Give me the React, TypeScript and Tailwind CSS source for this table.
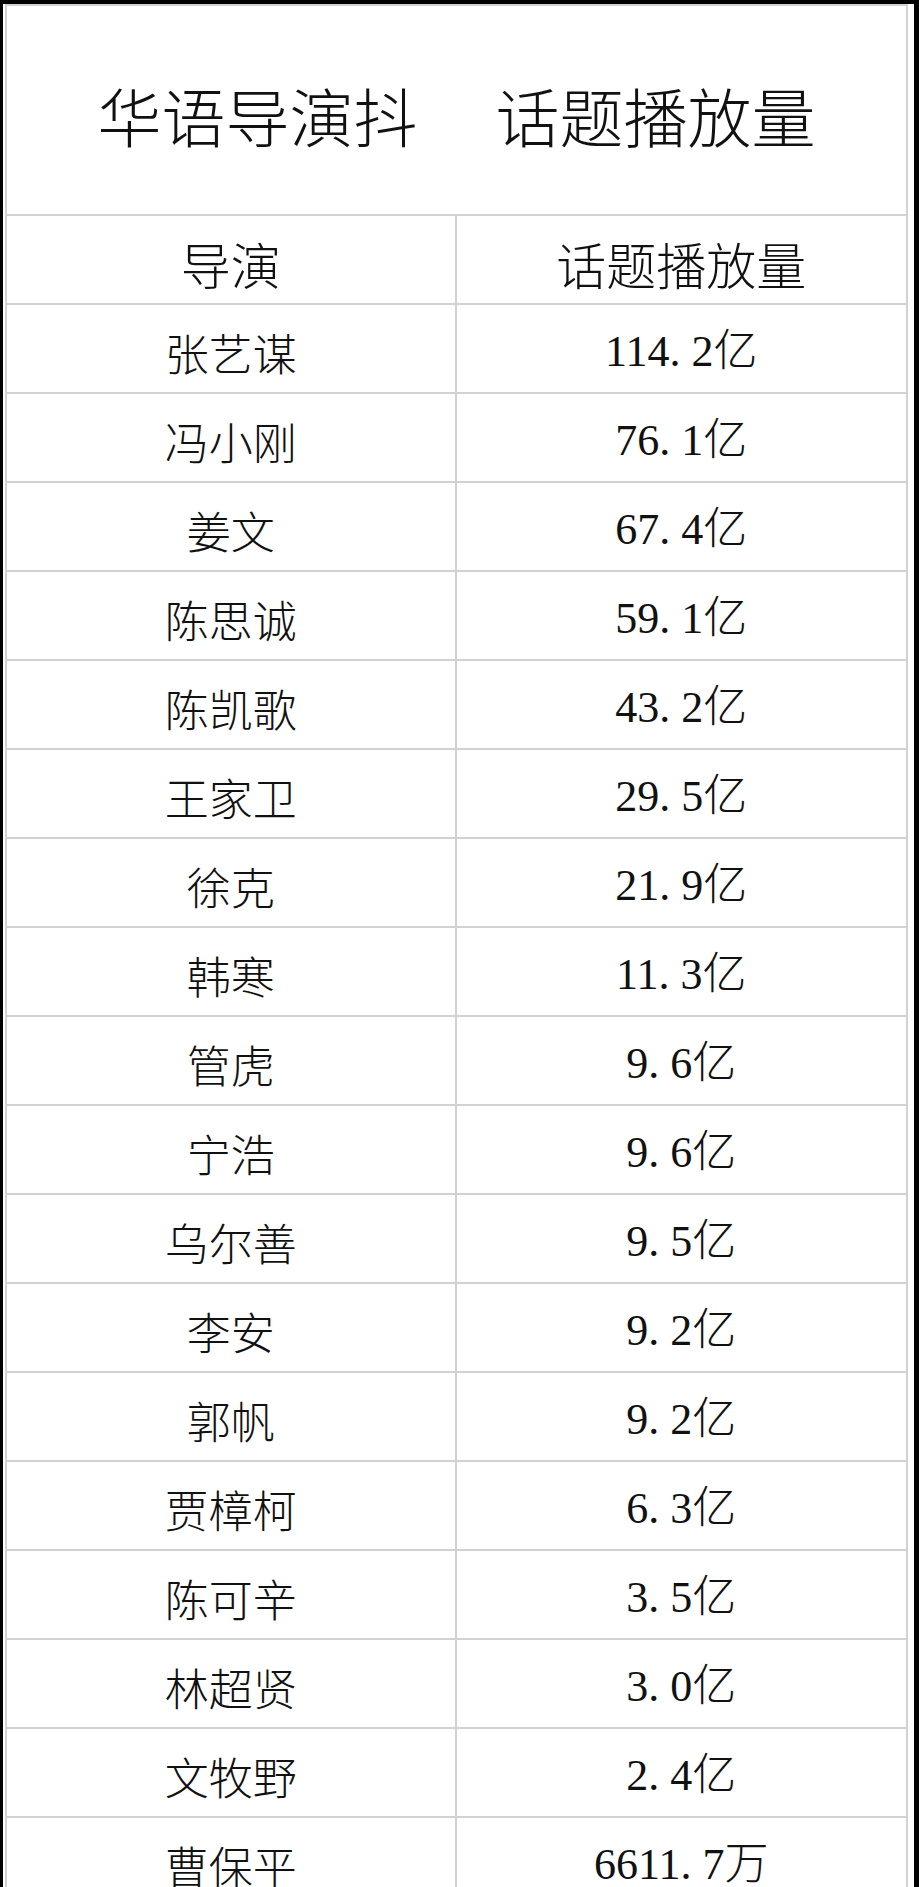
import React from 'react';

type Row = { name: string; value: string };

const rows: Row[] = [
  { name: '张艺谋', value: '114.2亿' },
  { name: '冯小刚', value: '76.1亿' },
  { name: '姜文', value: '67.4亿' },
  { name: '陈思诚', value: '59.1亿' },
  { name: '陈凯歌', value: '43.2亿' },
  { name: '王家卫', value: '29.5亿' },
  { name: '徐克', value: '21.9亿' },
  { name: '韩寒', value: '11.3亿' },
  { name: '管虎', value: '9.6亿' },
  { name: '宁浩', value: '9.6亿' },
  { name: '乌尔善', value: '9.5亿' },
  { name: '李安', value: '9.2亿' },
  { name: '郭帆', value: '9.2亿' },
  { name: '贾樟柯', value: '6.3亿' },
  { name: '陈可辛', value: '3.5亿' },
  { name: '林超贤', value: '3.0亿' },
  { name: '文牧野', value: '2.4亿' },
  { name: '曹保平', value: '6611.7万' },
];

// the source sheet uses half-width digits, so the dot takes a full digit slot
const Value = ({ text }: { text: string }) => {
  const [whole, rest] = text.split('.');
  return (
    <span>
      {whole}
      <span className="inline-block w-[0.5em]">.</span>
      {rest}
    </span>
  );
};

export default function App() {
  return (
    <div className="w-[919px] h-[1887px] overflow-hidden bg-black pt-[4px] pl-[3px] pr-[5px]">
      <div className="h-full bg-white pl-[2px] pr-[6px]">
        <div className="border-x-2 border-t-2 border-[#d2d2d2] text-[#111] font-['Noto_Sans_CJK_SC',sans-serif] font-light">
          <div className="h-[210px] border-b-2 border-[#d2d2d2] flex items-center justify-center gap-[78px] pt-[8px] text-[64px] leading-none">
            <span>华语导演抖</span>
            <span>话题播放量</span>
          </div>

          <div className="grid grid-cols-2 h-[89px] border-b-2 border-[#d2d2d2] text-[50px] leading-none">
            <div className="border-r-2 border-[#d2d2d2] flex items-center justify-center pt-[6px]">导演</div>
            <div className="flex items-center justify-center pt-[6px]">话题播放量</div>
          </div>

          {rows.map((r) => (
            <div key={r.name} className="grid grid-cols-2 h-[89px] border-b-2 border-[#d2d2d2] text-[44px] leading-none">
              <div className="border-r-2 border-[#d2d2d2] flex items-center justify-center pt-[6px]">{r.name}</div>
              <div className="flex items-center justify-center pt-[6px] font-['Liberation_Serif','Noto_Sans_CJK_SC',serif]">
                <Value text={r.value} />
              </div>
            </div>
          ))}
        </div>
      </div>
    </div>
  );
}
